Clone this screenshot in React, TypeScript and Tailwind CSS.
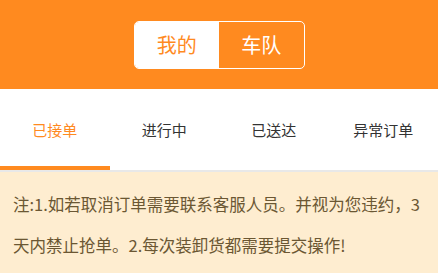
import React, { useState } from 'react';

const tabs = ['已接单', '进行中', '已送达', '异常订单'];

const App: React.FC = () => {
  const [mode, setMode] = useState<'mine' | 'team'>('mine');
  const [active, setActive] = useState(0);

  return (
    <div
      className="w-[438px] h-[273px] overflow-hidden bg-[#feedd0]"
      style={{ fontFamily: '"Noto Sans CJK SC", "Noto Sans", sans-serif' }}
    >
      {/* Header */}
      <div className="h-[89px] bg-[#ff8a1f] flex items-center justify-center">
        <div className="flex w-[171px] h-[48px] border border-white rounded-[5px] overflow-hidden">
          <button
            onClick={() => setMode('mine')}
            className={`flex-1 flex items-center justify-center text-[20px] ${
              mode === 'mine' ? 'bg-white text-[#ff8a1f]' : 'text-white'
            }`}
          >
            我的
          </button>
          <button
            onClick={() => setMode('team')}
            className={`flex-1 flex items-center justify-center text-[20px] ${
              mode === 'team' ? 'bg-white text-[#ff8a1f]' : 'text-white'
            }`}
          >
            车队
          </button>
        </div>
      </div>

      {/* Tabs */}
      <div className="grid grid-cols-4 bg-white border-b-2 border-[#e8e8e8]">
        {tabs.map((t, i) => (
          <button
            key={t}
            onClick={() => setActive(i)}
            className={`h-[81px] flex flex-col ${i === active ? 'text-[#ff8a1f]' : 'text-[#333333]'}`}
          >
            <span className="flex-1 flex items-center justify-center text-[15px] pt-[5px]">{t}</span>
            <span className={`h-[4px] w-full ${i === active ? 'bg-[#ff8a1f]' : ''}`} />
          </button>
        ))}
      </div>

      {/* Notice */}
      <p className="px-[13px] pt-[12px] text-[16.5px] leading-[41px] text-[#6b5733]">
        注:1.如若取消订单需要联系客服人员。并视为您违约，3天内禁止抢单。2.每次装卸货都需要提交操作!
      </p>
    </div>
  );
};

export default App;
